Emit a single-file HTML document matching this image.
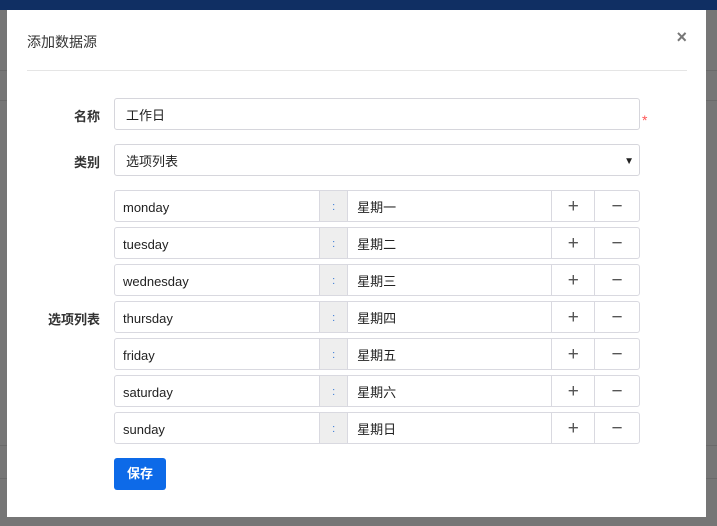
<!DOCTYPE html>
<html><head><meta charset="utf-8"><style>
*{box-sizing:border-box;margin:0;padding:0}
body{width:717px;height:526px;overflow:hidden;background:#767676;font-family:"Liberation Sans","Noto Sans CJK SC",sans-serif;position:relative}
.nav{position:absolute;left:0;top:0;width:717px;height:10px;background:#102f63}
.bgline{position:absolute;left:0;width:717px;height:1px;background:#6a6a6a}
.modal{position:absolute;left:7px;top:10px;width:699px;height:507px;background:#fff}
.title{position:absolute;left:20px;top:22px;font-size:14px;color:#333}
.close{position:absolute;right:19px;top:17px;font-size:18px;font-weight:bold;color:#777}
.hr{position:absolute;left:20px;top:60px;width:660px;height:1px;background:#e5e5e5}
.lbl{position:absolute;width:93px;text-align:right;font-size:13px;font-weight:bold;color:#333}
.inp{position:absolute;left:107px;width:526px;height:32px;border:1px solid #d6d6dc;border-radius:3px;font-size:13px;color:#222;padding-left:11px;line-height:33px}
.row{position:absolute;left:107px;width:526px;height:32px;border:1px solid #d9d9e0;border-radius:3px;display:flex;font-size:13px;color:#222;line-height:33px}
.row div{border-right:1px solid #d9d9e0;height:30px}
.k{width:206px;padding-left:8px}
.c{width:28px;background:#eee;text-align:center;color:#3a7bd5;font-size:11px}
.v{width:205px;padding-left:9px}
.p,.m{width:43px;text-align:center;font-size:19px;color:#555;line-height:31px}
.m{border-right:none!important;width:44px}
.btn{position:absolute;left:107px;top:448px;width:52px;height:32px;background:#0d6ae8;border-radius:3px;color:#fff;font-size:13px;font-weight:bold;text-align:center;line-height:32px}
</style></head><body>
<div class="nav"></div>
<div class="bgline" style="top:70px"></div>
<div class="bgline" style="top:100px"></div>
<div class="bgline" style="top:445px"></div>
<div class="bgline" style="top:478px"></div>
<div class="modal">
<div class="title">添加数据源</div>
<div class="close">×</div>
<div class="hr"></div>
<div class="lbl" style="top:96px">名称</div>
<div class="inp" style="top:88px">工作日</div>
<div style="position:absolute;left:635px;top:102px;color:#f55;font-size:14px">*</div>
<div class="lbl" style="top:142px">类别</div>
<div class="inp" style="top:134px">选项列表<span style="position:absolute;right:5px;top:0;font-size:10px;color:#222">▼</span></div>
<div class="lbl" style="top:299px">选项列表</div>
<div class="row" style="top:180px"><div class="k">monday</div><div class="c">:</div><div class="v">星期一</div><div class="p">+</div><div class="m">−</div></div>
<div class="row" style="top:217px"><div class="k">tuesday</div><div class="c">:</div><div class="v">星期二</div><div class="p">+</div><div class="m">−</div></div>
<div class="row" style="top:254px"><div class="k">wednesday</div><div class="c">:</div><div class="v">星期三</div><div class="p">+</div><div class="m">−</div></div>
<div class="row" style="top:291px"><div class="k">thursday</div><div class="c">:</div><div class="v">星期四</div><div class="p">+</div><div class="m">−</div></div>
<div class="row" style="top:328px"><div class="k">friday</div><div class="c">:</div><div class="v">星期五</div><div class="p">+</div><div class="m">−</div></div>
<div class="row" style="top:365px"><div class="k">saturday</div><div class="c">:</div><div class="v">星期六</div><div class="p">+</div><div class="m">−</div></div>
<div class="row" style="top:402px"><div class="k">sunday</div><div class="c">:</div><div class="v">星期日</div><div class="p">+</div><div class="m">−</div></div>
<div class="btn">保存</div>
</div>
</body></html>
